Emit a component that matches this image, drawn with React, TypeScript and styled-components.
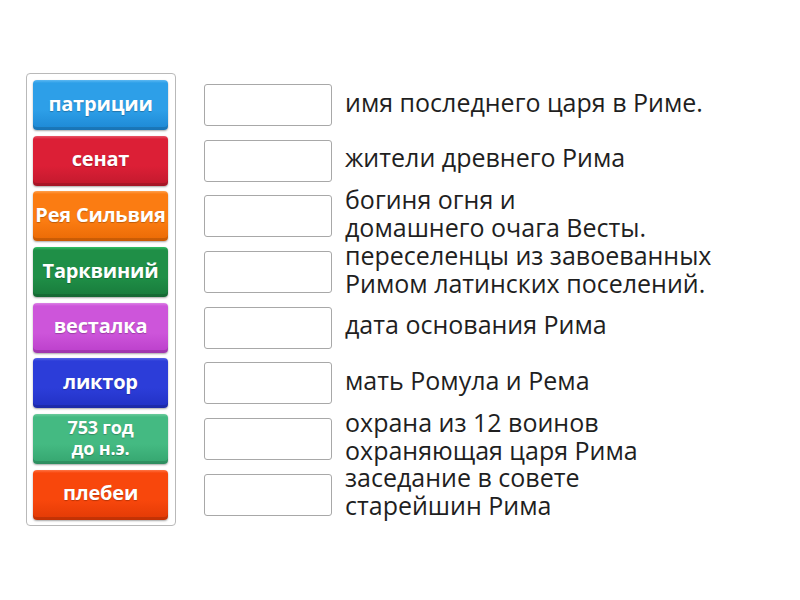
import React from "react";
import styled, { createGlobalStyle } from "styled-components";

const Global = createGlobalStyle`
  html, body { margin: 0; padding: 0; background: #ffffff; }
  body { font-family: "Open Sans", "Noto Sans", sans-serif; }
`;

const Page = styled.div`
  width: 800px;
  height: 600px;
  box-sizing: border-box;
  padding: 73px 0 0 26px;
  display: flex;
  align-items: flex-start;
`;

const Bank = styled.div`
  box-sizing: border-box;
  width: 150px;
  padding: 6px 7px 5px 6px;
  border: 1px solid #b9b9b9;
  border-radius: 4px;
  display: flex;
  flex-direction: column;
  gap: 5.7px;
`;

const Tile = styled.div<{ $c: string; $d: string; $l: string }>`
  box-sizing: border-box;
  height: 50px;
  width: 135px;
  padding-bottom: 3px;
  border-radius: 4px;
  background: linear-gradient(to bottom, ${(p) => p.$l} 0px, ${(p) => p.$c} 3px, ${(p) => p.$c} 60%, ${(p) => p.$d} 100%);
  box-shadow: inset 0 -3px 0 rgba(0, 0, 0, 0.14), 0 1px 2px rgba(0, 0, 0, 0.35);
  display: flex;
  align-items: center;
  justify-content: center;
  text-align: center;
  color: #ffffff;
  font-family: "Open Sans", "Noto Sans", sans-serif;
  font-weight: 700;
  font-size: 20px;
  line-height: 22px;
  text-shadow: 0 1px 1px rgba(0, 0, 0, 0.25);
  white-space: nowrap;
  letter-spacing: -0.2px;
`;

const SmallText = styled.span`
  font-size: 18px;
  line-height: 21px;
`;

const Targets = styled.div`
  margin-left: 28px;
  padding-top: 7px;
  display: flex;
  flex-direction: column;
  gap: 5.7px;
`;

const Row = styled.div`
  height: 50px;
  display: flex;
  align-items: center;
`;

const Slot = styled.div`
  box-sizing: border-box;
  width: 128px;
  height: 42px;
  flex: none;
  border: 1px solid #a8a8a8;
  border-radius: 3px;
  background: #ffffff;
`;

const Clue = styled.div`
  margin-left: 13px;
  padding-bottom: 7px;
  color: #1f1f1f;
  font-family: "Open Sans", "Noto Sans", sans-serif;
  font-size: 25px;
  line-height: 28px;
  white-space: pre-line;
`;

const tiles: { t: React.ReactNode; c: string; d: string; l: string }[] = [
  { t: "патриции", c: "#2d9fe8", d: "#1d88d4", l: "#5cb8f2" },
  { t: "сенат", c: "#dc1f36", d: "#c1192d", l: "#e95568" },
  { t: "Рея Сильвия", c: "#fb7c12", d: "#ea6a05", l: "#ffa04e" },
  { t: "Тарквиний", c: "#1f8f47", d: "#187a3b", l: "#30c464" },
  { t: "весталка", c: "#cd55da", d: "#bb3fcb", l: "#dc82e6" },
  { t: "ликтор", c: "#2c3dd9", d: "#2131c4", l: "#5565e6" },
  { t: <SmallText>753 год<br />до н.э.</SmallText>, c: "#44ba82", d: "#35a56f", l: "#6ccb9c" },
  { t: "плебеи", c: "#f8470c", d: "#e23a05", l: "#ff7444" },
];

const clues = [
  "имя последнего царя в Риме.",
  "жители древнего Рима",
  "богиня огня и\nдомашнего очага Весты.",
  "переселенцы из завоеванных\nРимом латинских поселений.",
  "дата основания Рима",
  "мать Ромула и Рема",
  "охрана из 12 воинов\nохраняющая царя Рима",
  "заседание в совете\nстарейшин Рима",
];

export default function App() {
  return (
    <>
      <Global />
      <Page>
        <Bank>
          {tiles.map((x, i) => (
            <Tile key={i} $c={x.c} $d={x.d} $l={x.l}>
              {x.t}
            </Tile>
          ))}
        </Bank>
        <Targets>
          {clues.map((c, i) => (
            <Row key={i}>
              <Slot />
              <Clue>{c}</Clue>
            </Row>
          ))}
        </Targets>
      </Page>
    </>
  );
}
